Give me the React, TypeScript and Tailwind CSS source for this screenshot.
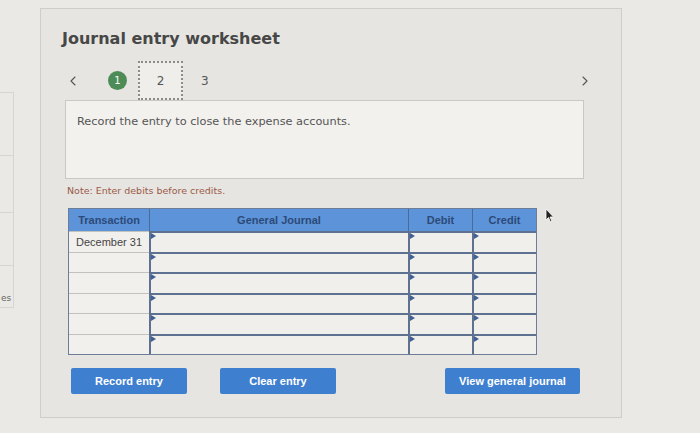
import { ChevronLeft, ChevronRight } from 'lucide-react';

const rows = ['December 31', '', '', '', '', ''];

function Flag() {
  return (
    <span className="absolute left-0 top-0 w-0 h-0 border-t-[3px] border-b-[3px] border-l-[5px] border-t-transparent border-b-transparent border-l-[#3f5f95]" />
  );
}

export default function App() {
  return (
    <div className="relative w-[700px] h-[433px] overflow-hidden bg-[#eae9e5] flex font-['DejaVu_Sans',sans-serif]">
      {/* Side panel, mostly off screen */}
      <div className="w-[14px] pt-[92px] flex flex-col">
        <div className="h-[63px] border-t border-r border-[#d6d5d1]" />
        <div className="h-[57px] border-t border-r border-[#d6d5d1]" />
        <div className="h-[53px] border-t border-r border-[#d6d5d1]" />
        <div className="h-[43px] border-t border-b border-r border-[#d6d5d1] flex items-end pb-[2px] pl-[1px]">
          <span className="text-[9px] text-[#666]">es</span>
        </div>
      </div>

      {/* Worksheet modal */}
      <div className="ml-[26px] mt-[8px] w-[582px] h-[410px] border border-[#cecdc9] bg-[#e6e5e1] flex flex-col">
        <h1 className="pl-[21px] pt-[18px] text-[16px] leading-[24px] font-bold text-[#474747]">
          Journal entry worksheet
        </h1>

        {/* Step navigation */}
        <div className="mt-[10px] flex items-center h-[39px] pl-[24px] pr-[28px]">
          <ChevronLeft size={16} strokeWidth={1.6} className="text-[#555]" />
          <div className="ml-[27px] w-[19px] h-[19px] rounded-full bg-[#4e8c57] text-white text-[10px] flex items-center justify-center">
            1
          </div>
          <div className="ml-[11px] w-[45px] h-[39px] border-2 border-dotted border-[#8a8a8a] bg-[#efeeea] flex items-center justify-center text-[12px] text-[#555]">
            2
          </div>
          <div className="ml-[18px] text-[12px] text-[#555]">3</div>
          <ChevronRight size={16} strokeWidth={1.6} className="ml-auto text-[#555]" />
        </div>

        {/* Instruction */}
        <div className="ml-[24px] w-[519px] h-[79px] border border-[#c9c8c4] bg-[#f2f1ed] pl-[11px] pt-[13px]">
          <p className="text-[11.3px] text-[#555]">Record the entry to close the expense accounts.</p>
        </div>

        <p className="ml-[26px] mt-[5px] text-[9.5px] text-[#9b5a48]">Note: Enter debits before credits.</p>

        {/* Journal table */}
        <div className="ml-[27px] mt-[10px] w-[469px] border border-[#6d7d98] font-['Liberation_Sans',sans-serif]">
          <div className="grid grid-cols-[80px_259px_64px_64px] h-[22px] bg-[#5d93d8] text-[11px] font-bold text-[#2c4a78]">
            <div className="flex items-center justify-center">Transaction</div>
            <div className="flex items-center justify-center border-l border-[#4a6a9a]">General Journal</div>
            <div className="flex items-center justify-center border-l border-[#4a6a9a]">Debit</div>
            <div className="flex items-center justify-center border-l border-[#4a6a9a]">Credit</div>
          </div>
          {rows.map((r, i) => (
            <div key={i} className="grid grid-cols-[80px_259px_64px_64px] h-[20.5px]">
              <div className="border-t border-[#c2c1bd] bg-[#f1f0ec] flex items-center justify-center text-[11px] text-[#444]">
                {r}
              </div>
              <div className="relative border-l-2 border-t-2 border-[#5e7191] bg-[#f0efeb]">
                <Flag />
              </div>
              <div className="relative border-l-2 border-t-2 border-[#5e7191] bg-[#f0efeb]">
                <Flag />
              </div>
              <div className="relative border-l-2 border-t-2 border-[#5e7191] bg-[#f0efeb]">
                <Flag />
              </div>
            </div>
          ))}
        </div>

        {/* Actions */}
        <div className="mt-[13px] ml-[30px] flex items-center font-['Liberation_Sans',sans-serif] text-[11px] font-bold text-white">
          <button className="w-[116px] h-[26px] bg-[#3f7fd0] rounded-[2px]">Record entry</button>
          <button className="ml-[33px] w-[116px] h-[26px] bg-[#3f7fd0] rounded-[2px]">Clear entry</button>
          <button className="ml-[109px] w-[135px] h-[26px] bg-[#3f7fd0] rounded-[2px]">View general journal</button>
        </div>
      </div>

      {/* Mouse pointer */}
      <svg className="absolute left-[545px] top-[208px]" width="10" height="15" viewBox="0 0 10 15">
        <path d="M1 1 L1 12 L3.5 9.5 L5.5 14 L7 13.3 L5 9 L8.5 9 Z" fill="#222" stroke="#fff" strokeWidth="0.8" />
      </svg>
    </div>
  );
}
